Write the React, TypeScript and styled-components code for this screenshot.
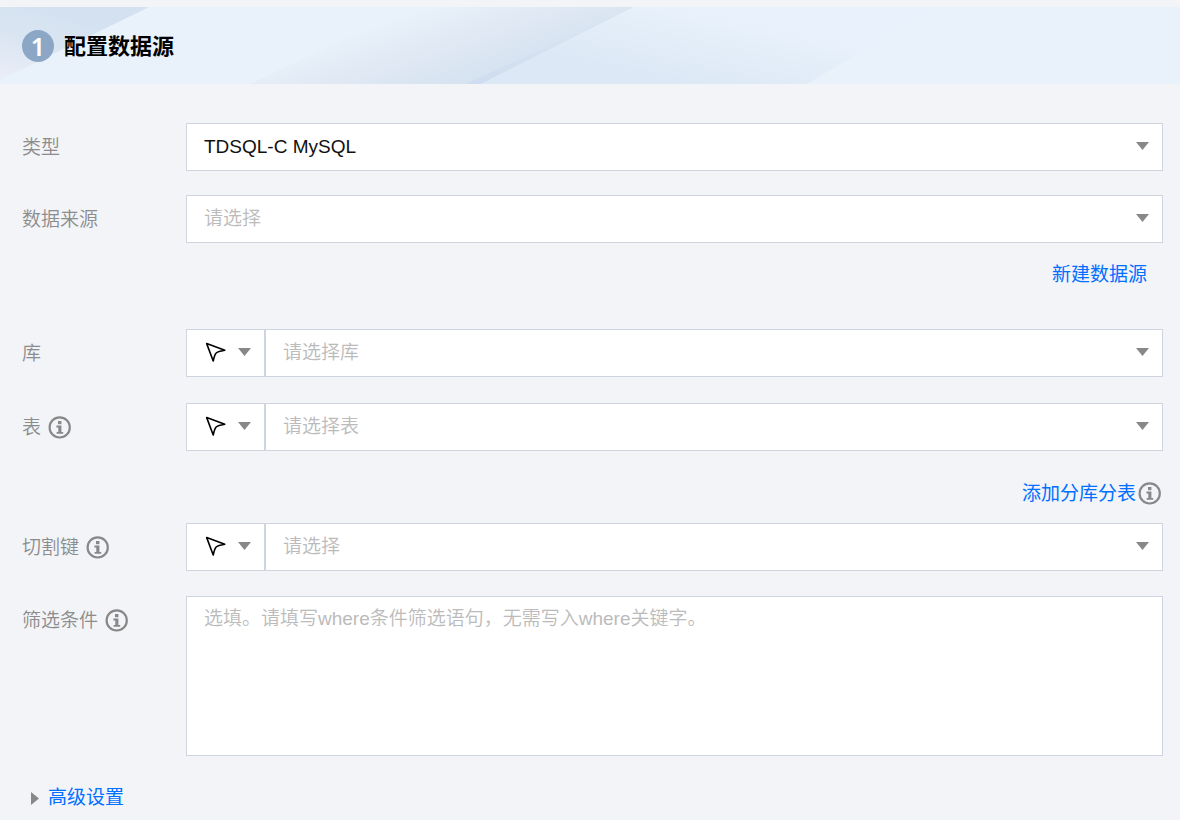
import React from 'react';
import styled, { createGlobalStyle, css } from 'styled-components';

const colors = {
  page: '#f2f4f8',
  border: '#cfd5e0',
  label: '#8c8c8c',
  icon: '#888888',
  hint: '#bbbbbb',
  link: '#006eff',
  text: '#111111',
};

const GlobalStyle = createGlobalStyle`
  *, *::before, *::after { box-sizing: border-box; }
  body {
    margin: 0;
    background: ${colors.page};
    color: ${colors.text};
    font-family: "Liberation Sans", "Noto Sans CJK SC", sans-serif;
    font-size: 19px;
    line-height: 28px;
  }
  button, select, textarea { font: inherit; color: inherit; }
`;

const Page = styled.main`
  padding-top: 7px;
`;

const Banner = styled.header`
  position: relative;
  display: flex;
  align-items: center;
  gap: 10px;
  height: 77px;
  padding: 0 22px;
  background: #e9f1fb;
`;

const BannerArt = styled.svg`
  position: absolute;
  inset: 0;
  width: 100%;
  height: 100%;
`;

const StepNumber = styled.span`
  position: relative;
  display: flex;
  align-items: center;
  justify-content: center;
  width: 32px;
  height: 32px;
  border-radius: 50%;
  background: #8ca7c6;
  color: #fff;
  font-family: "Noto Sans", sans-serif;
  font-size: 25px;
  font-weight: 600;
`;

const StepTitle = styled.h1`
  position: relative;
  margin: 0;
  padding-top: 2px;
  color: #000;
  font-size: 22px;
  line-height: 32px;
  font-weight: 700;
`;

const Form = styled.form`
  padding: 39px 17px 8px 22px;
`;

const Row = styled.div<{ $gap: number; $top?: boolean }>`
  display: grid;
  grid-template-columns: 164px minmax(0, 1fr);
  align-items: ${(p) => (p.$top ? 'start' : 'center')};
  margin-bottom: ${(p) => p.$gap}px;
`;

const LabelCell = styled.div<{ $top?: boolean }>`
  display: flex;
  align-items: center;
  gap: 7px;
  padding-top: ${(p) => (p.$top ? 9 : 0)}px;
  color: ${colors.label};
  font-weight: 350;
`;

const Label = styled.label`
  padding-top: 2px;
`;

const Field = styled.div`
  display: flex;
  height: 48px;
`;

const box = css`
  border: 1px solid ${colors.border};
  border-radius: 0;
  background: #fff;
`;

const SelectWrap = styled.div`
  position: relative;
  flex: 1;
  min-width: 0;
`;

const Select = styled.select<{ $empty: boolean }>`
  ${box}
  appearance: none;
  display: block;
  width: 100%;
  height: 48px;
  padding: 0 40px 0 17px;
  color: ${(p) => (p.$empty ? colors.hint : colors.text)};
  font-weight: ${(p) => (p.$empty ? 350 : 400)};
`;

const SelectCaret = styled.span`
  position: absolute;
  top: 0;
  right: 14px;
  bottom: 2px;
  display: flex;
  align-items: center;
  pointer-events: none;
`;

const ModeButton = styled.button`
  ${box}
  display: flex;
  align-items: center;
  gap: 12px;
  width: 79px;
  padding: 0 0 2px 17px;
`;

const TextArea = styled.textarea`
  ${box}
  display: block;
  width: 100%;
  height: 160px;
  padding: 8px 17px;
  resize: none;
  &::placeholder {
    color: ${colors.hint};
    font-weight: 350;
    opacity: 1;
  }
`;

const LinkRow = styled.div<{ $inset: number; $gap: number }>`
  display: flex;
  align-items: center;
  justify-content: flex-end;
  gap: 2px;
  padding-right: ${(p) => p.$inset}px;
  margin-bottom: ${(p) => p.$gap}px;
`;

const Link = styled.a`
  padding-top: 2px;
  color: ${colors.link};
  text-decoration: none;
`;

const InfoButton = styled.button`
  display: flex;
  padding: 0;
  border: 0;
  background: none;
  color: ${colors.icon};
`;

const Advanced = styled.button`
  display: flex;
  align-items: center;
  gap: 9px;
  padding: 0 0 0 9px;
  border: 0;
  background: none;
  color: ${colors.link};
`;

const Caret = () => (
  <svg width="13" height="8" viewBox="0 0 13 8" aria-hidden="true">
    <path d="M0 0H13L6.5 8Z" fill="#888" />
  </svg>
);

const Pointer = () => (
  <svg width="22" height="22" viewBox="0 0 22 22" fill="none" aria-hidden="true">
    <path d="M2.7 2.6L20.8 9.2Q13 10.6 12 12.2Q10.6 13.6 9.2 20Z" stroke="#000" strokeWidth="1.6" strokeLinejoin="round" />
  </svg>
);

const Info = ({ about }: { about: string }) => (
  <InfoButton type="button" aria-label={about}>
    <svg width="23" height="24" viewBox="0 0 23 24" fill="none" aria-hidden="true">
      <circle cx="11.7" cy="12.4" r="10.1" stroke="currentColor" strokeWidth="2.2" />
      <rect x="10" y="6" width="3.4" height="3.2" fill="currentColor" />
      <path d="M8.4 10.6H13.4V17H15.2V18.8H8.6V17H10.3V12.4H8.4Z" fill="currentColor" />
    </svg>
  </InfoButton>
);

type PickerProps = { id: string; label: string; value: string; empty?: boolean; info?: boolean; mode?: boolean; gap: number };

const Picker = ({ id, label, value, empty = false, info, mode, gap }: PickerProps) => (
  <Row $gap={gap}>
    <LabelCell>
      <Label htmlFor={id}>{label}</Label>
      {info && <Info about={label} />}
    </LabelCell>
    <Field>
      {mode && (
        <ModeButton type="button" aria-haspopup="listbox" aria-label={label}>
          <Pointer />
          <Caret />
        </ModeButton>
      )}
      <SelectWrap>
        <Select id={id} $empty={empty}>
          <option>{value}</option>
        </Select>
        <SelectCaret>
          <Caret />
        </SelectCaret>
      </SelectWrap>
    </Field>
  </Row>
);

export default function App() {
  return (
    <>
      <GlobalStyle />
      <Page>
        <Banner>
          <BannerArt viewBox="0 0 1180 77" preserveAspectRatio="none" aria-hidden="true">
            <defs>
              <linearGradient id="corner" gradientUnits="userSpaceOnUse" x1="60" y1="0" x2="38" y2="77">
                <stop offset="0" stopColor="#d3e1f0" />
                <stop offset="0.5" stopColor="#dae5f2" />
                <stop offset="1" stopColor="#e8edf7" />
              </linearGradient>
              <linearGradient id="fold" gradientUnits="userSpaceOnUse" x1="425" y1="0" x2="455" y2="90">
                <stop offset="0" stopColor="#e9f1fb" />
                <stop offset="0.4" stopColor="#e1e9f4" />
                <stop offset="1" stopColor="#d3e1f0" />
              </linearGradient>
              <linearGradient id="edge" gradientUnits="userSpaceOnUse" x1="630" y1="0" x2="470" y2="77">
                <stop offset="0" stopColor="#d8e4f1" stopOpacity="0" />
                <stop offset="1" stopColor="#cddcef" />
              </linearGradient>
              <linearGradient id="sheet" gradientUnits="userSpaceOnUse" x1="700" y1="0" x2="684" y2="77">
                <stop offset="0" stopColor="#e9f2fc" />
                <stop offset="1" stopColor="#dce8f5" />
              </linearGradient>
            </defs>
            <path d="M0 0H149L0 73Z" fill="url(#corner)" />
            <path d="M410 0H634L481 77H250Z" fill="url(#fold)" />
            <path d="M634 0L466 77H481Z" fill="url(#edge)" />
            <path d="M634 0H935L807 77H481Z" fill="url(#sheet)" />
          </BannerArt>
          <StepNumber>1</StepNumber>
          <StepTitle>配置数据源</StepTitle>
        </Banner>
        <Form>
          <Picker id="type" label="类型" value="TDSQL-C MySQL" gap={24} />
          <Picker id="source" label="数据来源" value="请选择" empty gap={16} />
          <LinkRow $inset={16} $gap={40}>
            <Link href="#new-source">新建数据源</Link>
          </LinkRow>
          <Picker id="database" label="库" value="请选择库" empty mode gap={26} />
          <Picker id="table" label="表" value="请选择表" empty mode info gap={27} />
          <LinkRow $inset={2} $gap={15}>
            <Link href="#add-shard">添加分库分表</Link>
            <Info about="添加分库分表" />
          </LinkRow>
          <Picker id="split-key" label="切割键" value="请选择" empty mode info gap={25} />
          <Row $gap={28} $top>
            <LabelCell $top>
              <Label htmlFor="filter">筛选条件</Label>
              <Info about="筛选条件" />
            </LabelCell>
            <TextArea id="filter" placeholder="选填。请填写where条件筛选语句，无需写入where关键字。" />
          </Row>
          <Advanced type="button" aria-expanded="false">
            <svg width="8" height="13" viewBox="0 0 8 13" aria-hidden="true">
              <path d="M0 0L8 6.5L0 13Z" fill="#888" />
            </svg>
            高级设置
          </Advanced>
        </Form>
      </Page>
    </>
  );
}
